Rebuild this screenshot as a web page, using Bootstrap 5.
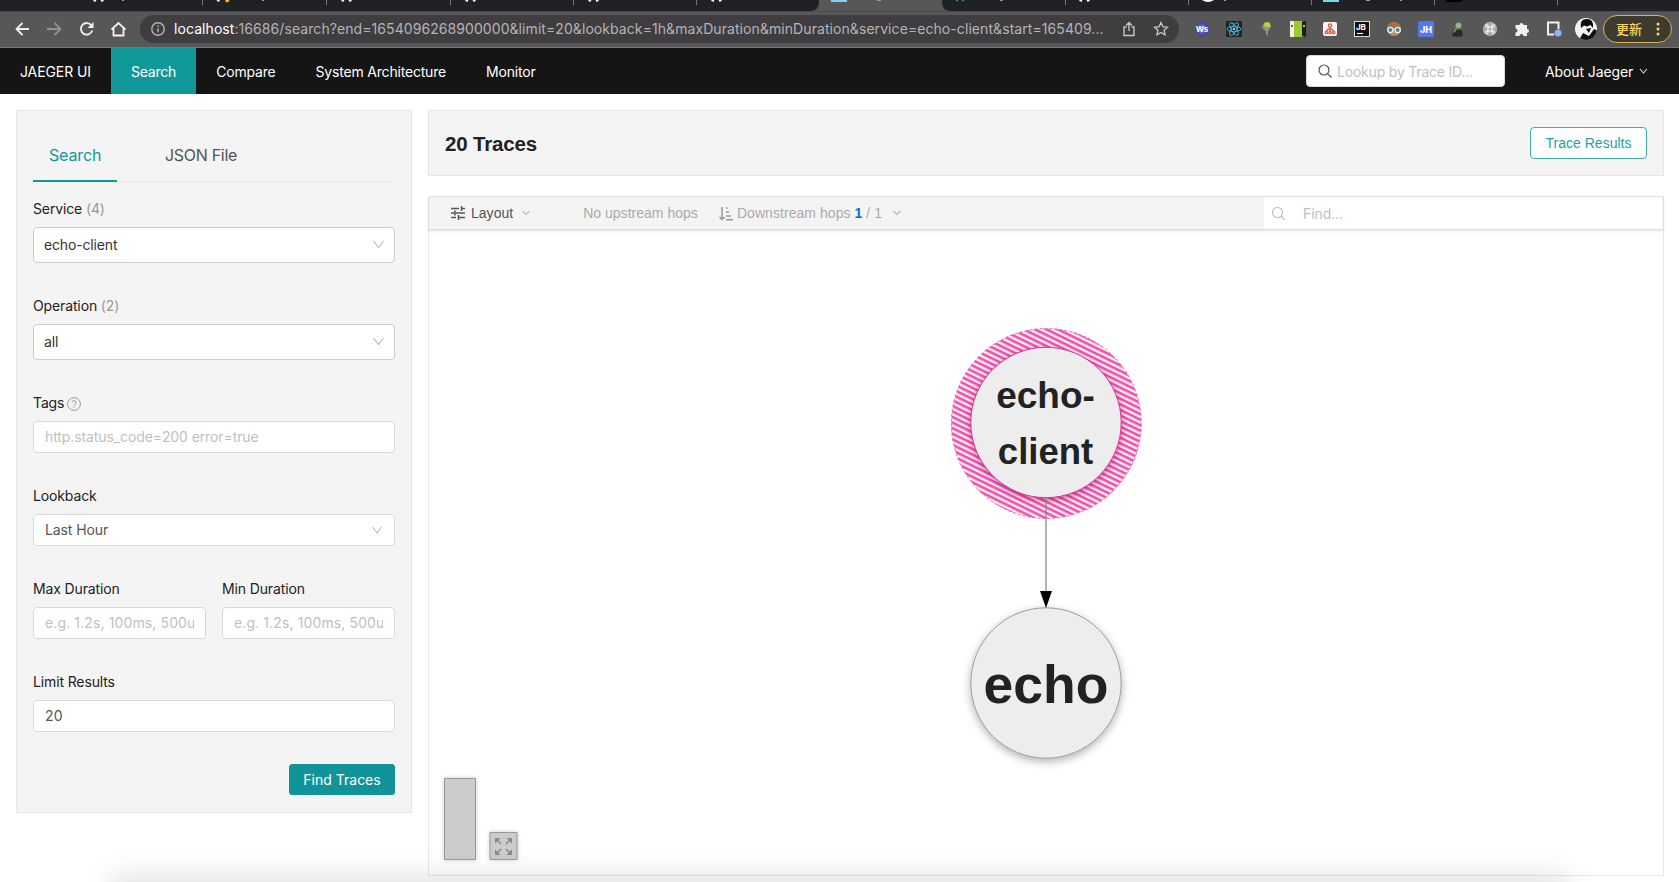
<!DOCTYPE html>
<html lang="en">
<head>
<meta charset="utf-8">
<title>Jaeger UI</title>
<link href="https://cdn.jsdelivr.net/npm/bootstrap@5.3.0/dist/css/bootstrap.min.css" rel="stylesheet">
<style>
:root{--teal:#119999}
body{font:14px/1.5 Inter,"Liberation Sans",sans-serif;letter-spacing:-.1px;color:#222;height:882px;overflow:hidden;position:relative;background:#fff}
svg{display:block;flex:none}
.tabstrip{height:11px;background:#202124}
.browserbar{height:37px;background:#575757;border-top:1px solid #4c4c4c;border-bottom:1px solid #777;padding:0 7px 2px 14px}
.omnibox{margin-left:14px;width:1039px;height:28px;border-radius:14px;background:#3f3d40;color:#b5b4b6;padding:0 10px 0 11px;font-size:14px;white-space:nowrap;letter-spacing:.072px}
.omnibox b{font-weight:400;color:#fff}
.update{width:69px;height:28px;border:1.5px solid #d9b44f;border-radius:14px;background:#3d3a30;color:#fdd663;font:500 13px "Noto Sans CJK SC",sans-serif;padding-left:12px}
.ext{margin-left:15px;gap:16px}
.topnav{height:46px;background:#151515;color:#fff}
.topnav .item{height:46px;line-height:47px;padding:0 20px;white-space:nowrap;letter-spacing:-.19px}
.topnav .item:first-child{letter-spacing:-.1px}
.topnav .item.active{background:var(--teal)}
.lookup{width:199px;height:32px;background:#fff;border-radius:4px;border:1px solid #d9d9d9;color:#bfbfbf;padding-left:11px;letter-spacing:-.2px}
.side{width:396px;height:703px;background:#f4f4f4;border:1px solid #e6e6e6;padding:16px 16px 16px 16px}
.tabs{height:55px;border-bottom:1px solid #e8e8e8;font-size:16px;letter-spacing:-.3px}
.tabs>div{height:55px;padding-top:16px}
.tabs .on{color:var(--teal);border-bottom:2px solid var(--teal);width:84px;padding-left:16px;letter-spacing:-.15px}
.flabel{height:36px;line-height:36px;white-space:nowrap;letter-spacing:-.13px}
.flabel small{color:#999;font-size:14px}
.fbox{background:#fff;border:1px solid #d9d9d9;border-radius:4px;height:32px;padding:0 11px 1px;margin-bottom:25px;white-space:nowrap;overflow:hidden;color:#555}
.fbox.tall{height:36px;border-color:#ccc;color:#333;padding:0 10px 1px;letter-spacing:-.15px}
.fbox.ph{color:#bfbfbf}
.fbox.dur{letter-spacing:.12px}
.fbox>span{overflow:hidden}
.find{width:106px;height:31px;background:#11939a;border-color:#11939a;border-radius:3px;color:#fff;font-size:14px;padding:0}
.helv{font-family:"Liberation Sans",Arial,sans-serif;letter-spacing:.02px}
.panel{width:1236px;height:66px;background:#f4f4f4;border:1px solid #e6e6e6;padding:0 16px}
.panel h2{font-size:20.5px;font-weight:700;margin:0;letter-spacing:-.18px;padding-top:2px}
.results{width:117px;height:32px;border:1px solid #3bb0ac;background:#fff;border-radius:4px;color:#26a29e;font-size:14px;padding:0}
.graph{width:1236px;height:680px;border:1px solid #e6e6e6;margin-top:20px}
.gbar{height:33px;background:#f4f4f4;border-bottom:1px solid #ddd;box-shadow:0 1px 3px rgba(0,0,0,.12);color:#aaa;padding-left:22px;position:relative;white-space:nowrap}
.gbar>span{padding-top:1px}
.finder{width:398px;height:32px;background:#fff;color:#bfbfbf;padding-left:8px;margin-right:1px;margin-left:auto}
.shade{position:absolute;left:120px;right:120px;bottom:-16px;height:12px;box-shadow:0 0 28px 10px rgba(0,0,0,.12)}
</style>
</head>
<body>
<div class="tabstrip">
<svg width="1679" height="11">
<path d="M810 11q9 0 9-9V0H942v2q0 9 9 9z" fill="#575757"/>
<path d="M202.500 0v5M326.500 0v5M450.500 0v5M573.500 0v5M696.500 0v5M1065.500 0v5M1188.500 0v5M1311.500 0v5M1434.500 0v5M1557.500 0v5" stroke="#77787a"/>
<g stroke="#eee" stroke-width="2" fill="none"><path d="M93.500 0l2.500 1M103.500 0l-2.500 1M217 0l2.500 1M341.500 0l2.500 1M351.500 0l-2.500 1M465.500 0l2.500 1M475.500 0l-2.500 1M588.500 0l2.500 1M598.500 0l-2.500 1M711.500 0l2.500 1M721.500 0l-2.500 1M1079.500 0l2.500 1M1089.500 0l-2.500 1"/></g>
<path d="M229 0l-3.500 1" stroke="#fbbc04" stroke-width="3"/>
<path d="M831 0h16v2h-16zM1323 0h16v2h-16z" fill="#7fd3e8"/>
<path d="M956 0l2 1M964 0l-2 1" stroke="#229a22" stroke-width="1.500"/>
<path d="M1202 0h12q-6 4-12 0z" fill="#fff"/><path d="M1446 0h16v2h-16z" fill="#000"/>
<path d="M122 .500h2M262 .500h2M877 .500h4M1000 .500h3M1224 .500h2M1366 .500h4M1400 .500h2" stroke="#999"/>
</svg>
</div>
<div class="browserbar d-flex align-items-center">
<svg width="112" height="20" fill="none" stroke="#f1f1f1" stroke-width="1.800"><path d="M15 10H3M8.500 4L2.500 10l6 6"/><path d="M33 10h13M40.500 4l6 6-6 6" stroke="#929292"/><path d="M77.500 6.500A5.800 5.800 0 1 0 78.300 11.500"/><path d="M79.500 3v6h-6z" fill="#f1f1f1" stroke="none"/><path d="M97.500 10.500L104.500 4l7 6.500M99.500 9v7.500h10V9"/></svg>
<div class="omnibox d-flex align-items-center">
<svg width="14" height="14" fill="none" stroke="#b5b4b6" stroke-width="1.400"><circle cx="7" cy="7" r="6.200"/><path d="M7 6.300v4M7 3.500v1.500"/></svg>
<span style="margin-left:9px"><b>localhost</b>:16686/search?end=1654096268900000&amp;limit=20&amp;lookback=1h&amp;maxDuration&amp;minDuration&amp;service=echo-client&amp;start=165409...</span>
<svg class="ms-auto" width="14" height="16" fill="none" stroke="#c4c3c5" stroke-width="1.400"><path d="M4.500 6H2v8.500h10V6H9.500M7 10V1.500M4 4.500l3-3 3 3"/></svg>
<svg style="margin-left:17px" width="16" height="16" fill="none" stroke="#c4c3c5" stroke-width="1.400"><path d="M8 1.500l1.900 4.200 4.600.5-3.400 3.100.9 4.500L8 11.500l-4 2.300.9-4.500L1.500 6.200l4.600-.5z"/></svg>
</div>
<div class="ext d-flex align-items-center">
<svg width="16" height="16"><defs><radialGradient id="w"><stop stop-color="#7d7ce8"/><stop offset="1" stop-color="#3c3ca4"/></radialGradient></defs><circle cx="8" cy="8" r="7.200" fill="url(#w)"/><text x="8" y="11" text-anchor="middle" font-size="8" font-weight="700" fill="#fff">Ws</text></svg>
<svg width="16" height="16"><rect width="16" height="16" rx="1" fill="#20232a"/><g fill="none" stroke="#4fb9d8" stroke-width=".9"><ellipse cx="8" cy="8" rx="7" ry="2.700"/><ellipse cx="8" cy="8" rx="7" ry="2.700" transform="rotate(60 8 8)"/><ellipse cx="8" cy="8" rx="7" ry="2.700" transform="rotate(120 8 8)"/></g><circle cx="8" cy="8" r="1.300" fill="#61dafb"/></svg>
<svg width="16" height="16"><circle cx="9" cy="4.500" r="3.600" fill="#b9cf35"/><path d="M3 5.500h10.500L9.800 10.500v4.500l-1.800-1.500v-3z" fill="#8c9793"/><path d="M8 5.500a3 3 0 0 1 4 0z" fill="#dce86a"/></svg>
<svg width="16" height="16"><path d="M0 0h4v16H0z" fill="#eef1e4"/><path d="M4 0h8v16H4z" fill="#9dc92c"/><path d="M12 1l4-1v16l-4-2z" fill="#1c1f14"/><circle cx="2" cy="5" r="1" fill="#333"/><circle cx="14" cy="5" r="1" fill="#eee"/></svg>
<svg width="16" height="16"><rect x="1" y="1" width="14" height="14" rx="2" fill="#f7f4f2"/><g fill="none" stroke="#e2573d" stroke-width="1.300"><circle cx="8" cy="4.500" r="1.600"/><path d="M8 6v5M4.500 11Q4.500 8 8 8t3.500 3"/><circle cx="4.300" cy="11.500" r="1.200"/><circle cx="8" cy="11.500" r="1.200"/><circle cx="11.700" cy="11.500" r="1.200"/></g></svg>
<svg width="16" height="16"><rect x=".5" y=".5" width="15" height="15" fill="#111" stroke="#ddd"/><text x="2" y="8.500" font-size="8" font-weight="700" fill="#fff">JB</text><path d="M3 12.500h6" stroke="#fff" stroke-width="1.200"/></svg>
<svg width="16" height="16"><circle cx="8" cy="8" r="7" fill="#c68e63"/><path d="M1.500 7Q3 1 8 1t6.500 6z" fill="#a96d43"/><g fill="#4a8794" stroke="#e6f3f4" stroke-width="1.300"><circle cx="4.300" cy="9" r="2.600"/><circle cx="11.700" cy="9" r="2.600"/></g></svg>
<svg width="16" height="16"><rect width="16" height="16" rx="1.500" fill="#5578ee"/><text x="8" y="11.500" text-anchor="middle" font-size="9" font-weight="800" fill="#fff">JH</text></svg>
<svg width="16" height="16"><path d="M2.500 15.500V10q5-4 10 0v5.500z" fill="#272b26"/><circle cx="8.500" cy="4.500" r="3.500" fill="#a3aea3" stroke="#45723a" stroke-width="1.300"/><path d="M6.500 7.500l-3 4" stroke="#6ba83c" stroke-width="1.500"/></svg>
<svg width="16" height="16"><circle cx="8" cy="8" r="7.200" fill="#aaa"/><path d="M6 6h4v4H6zM6 6H4.800A1.300 1.300 0 1 1 6 4.800zM10 6V4.800A1.300 1.300 0 1 1 11.200 6zM10 10h1.200A1.300 1.300 0 1 1 10 11.200zM6 10v1.200A1.300 1.300 0 1 1 4.800 10z" fill="none" stroke="#fff"/></svg>
<svg width="16" height="16" fill="#f1f1f1"><path d="M1.500 4h4a2 2 0 1 1 4 0h3.500v4a2 2 0 1 1 0 4v3H9.500a2 2 0 0 0-4 0h-4v-3.500a2 2 0 0 0 0-4z"/></svg>
<svg width="16" height="16"><path d="M8 13.500H2v-12h10.500V8" fill="none" stroke="#f1f1f1" stroke-width="2"/><circle cx="12" cy="12" r="3.500" fill="#8ab4f8"/></svg>
</div>
<svg style="margin-left:13px" width="22" height="22"><defs><clipPath id="av"><circle cx="11" cy="11" r="11"/></clipPath></defs><g clip-path="url(#av)"><path d="M0 0h22v22H0z" fill="#f3f3f3"/><path d="M6 10Q4 1 12 1q7 0 6 9l-2.500-3-3.500 1.500L9 7.500z" fill="#0b0b0b"/><path d="M4 22l4-7 6 3 5-7 4 2v9zM11 11l5-1-2 5z" fill="#111"/></g></svg>
<div class="update d-flex align-items-center ms-auto"><span>更新</span><svg style="margin-left:14px" width="4" height="14" fill="#fdd663"><circle cx="2" cy="2" r="1.500"/><circle cx="2" cy="7" r="1.500"/><circle cx="2" cy="12" r="1.500"/></svg></div>
</div>

<nav class="topnav d-flex align-items-center">
<div class="item">JAEGER UI</div><div class="item active">Search</div><div class="item">Compare</div><div class="item">System Architecture</div><div class="item">Monitor</div>
<div class="lookup d-flex align-items-center ms-auto"><svg width="14" height="14" fill="none" stroke="#555" stroke-width="1.200"><circle cx="6" cy="6" r="5"/><path d="M9.600 9.600L13.500 13.500"/></svg><span style="margin-left:5px">Lookup by Trace ID...</span></div>
<div class="d-flex align-items-center" style="margin-left:40px;width:134px"><span>About Jaeger</span><svg style="margin-left:6px" width="9" height="8" fill="none" stroke="#ddd" stroke-width="1.100"><path d="M1 2l3.500 4L8 2"/></svg></div>
</nav>

<main class="d-flex align-items-start" style="padding:16px 0 0 16px;gap:16px">
<section class="side flex-shrink-0">
<div class="tabs d-flex"><div class="on">Search</div><div style="margin-left:48px;color:#555">JSON File</div></div>
<div style="height:9px"></div>
<div class="flabel">Service <small>(4)</small></div>
<div class="fbox tall d-flex align-items-center justify-content-between">echo-client<svg width="11" height="9" fill="none" stroke="#bbb" stroke-width="1.100"><path d="M.5 1l5 6.500L10.500 1"/></svg></div>
<div class="flabel">Operation <small>(2)</small></div>
<div class="fbox tall d-flex align-items-center justify-content-between">all<svg width="11" height="9" fill="none" stroke="#bbb" stroke-width="1.100"><path d="M.5 1l5 6.500L10.500 1"/></svg></div>
<div class="flabel d-flex align-items-center">Tags<svg style="margin:2px 0 0 3px" width="14" height="14" fill="none" stroke="#999"><circle cx="7" cy="7" r="6.400"/><path d="M5 5.600a2 2 0 1 1 2.600 1.900q-.6.300-.6 1M7 9.600v1.200"/></svg></div>
<div class="fbox ph d-flex align-items-center">http.status_code=200 error=true</div>
<div class="flabel">Lookback</div>
<div class="fbox d-flex align-items-center justify-content-between">Last Hour<svg width="10" height="8" fill="none" stroke="#bbb" stroke-width="1.100" style="margin-right:1px"><path d="M.5 1l4.500 6L9.500 1"/></svg></div>
<div class="d-flex" style="gap:16px">
<div style="width:173px"><div class="flabel">Max Duration</div><div class="fbox ph dur d-flex align-items-center"><span>e.g. 1.2s, 100ms, 500us</span></div></div>
<div style="width:173px"><div class="flabel">Min Duration</div><div class="fbox ph dur d-flex align-items-center"><span>e.g. 1.2s, 100ms, 500us</span></div></div>
</div>
<div class="flabel">Limit Results</div>
<div class="fbox d-flex align-items-center" style="letter-spacing:.2px">20</div>
<div class="d-flex justify-content-end" style="padding-top:7px"><button class="btn find">Find Traces</button></div>
</section>

<section>
<div class="panel d-flex align-items-center justify-content-between helv"><h2>20 Traces</h2><button class="btn results">Trace Results</button></div>
<div class="graph">
<div class="gbar d-flex align-items-center helv">
<svg width="14" height="14" fill="none" stroke="#555" stroke-width="1.500"><path d="M0 2.500h8M10 2.500h4M10.500 0v5M0 7h3.500M5 7h9M4 4.500v5M0 11.500h5M7.500 11.500H14M7.500 9v5"/></svg>
<span style="margin-left:6px;color:#555">Layout</span>
<svg style="margin-left:9px" width="8" height="6" fill="none" stroke="#999"><path d="M.5 1L4 4.500 7.500 1"/></svg>
<span style="margin-left:53px">No upstream hops</span>
<svg style="margin-left:21px" width="14" height="15" fill="none" stroke="#999" stroke-width="1.500"><path d="M3 1v12M.5 11L3 13.500 5.500 11M7 2h1.500M7 6h3M7 10h5M7 13.800h7"/></svg>
<span style="margin-left:4px;letter-spacing:.06px">Downstream hops <b style="color:#0a6fdf">1</b> / 1</span>
<svg style="margin-left:11px" width="8" height="6" fill="none" stroke="#888"><path d="M.5 1L4 4.500 7.500 1"/></svg>
<div class="finder d-flex align-items-center"><svg width="13" height="13" fill="none" stroke="#bbb" stroke-width="1.100"><circle cx="5.500" cy="5.500" r="5"/><path d="M9 9l3.700 3.700"/></svg><span style="margin-left:18px;font-family:Inter,sans-serif;letter-spacing:-.1px">Find...</span></div>
</div>
<svg width="1234" height="645" viewBox="429 230 1234 645">
<defs>
<pattern id="hatch" width="10" height="5" patternUnits="userSpaceOnUse" patternTransform="rotate(26)"><rect width="10" height="5" fill="#fff0f8"/><rect y="1" width="10" height="2.600" fill="#f04fa8"/></pattern>
<filter id="sh" x="-20%" y="-20%" width="140%" height="140%"><feDropShadow dx="0" dy="3" stdDeviation="4" flood-color="#000" flood-opacity=".3"/></filter>
<filter id="pk" x="-20%" y="-20%" width="140%" height="140%"><feDropShadow dx="0" dy="2" stdDeviation="3" flood-color="#a00060" flood-opacity=".6"/></filter>
</defs>
<circle cx="1046.300" cy="423.500" r="95" fill="url(#hatch)" stroke="#f04fa8" stroke-width=".8" stroke-dasharray="3 2"/>
<circle cx="1046" cy="422.500" r="75.200" fill="#ededed" stroke="#d13a8e" filter="url(#pk)"/>
<path d="M1046 498v94" stroke="#888" stroke-width="1.300"/>
<circle cx="1046" cy="683" r="75.200" fill="#ededed" stroke="#999" filter="url(#sh)"/>
<path d="M1040 591h12l-6 17z"/>
<g font-family="'Liberation Sans',Arial,sans-serif" font-weight="700" fill="#222" text-anchor="middle" letter-spacing="0">
<text x="1045.500" y="408" font-size="37">echo-</text><text x="1045.500" y="463.500" font-size="36.500">client</text><text x="1046" y="702.500" font-size="53.500">echo</text></g>
<g stroke="#999" fill="#ccc" style="filter:drop-shadow(0 0 2px rgba(0,0,0,.2))"><path d="M444.500 778.500h31v81h-31zM490 832.500h27v27h-27z"/></g>
<g stroke="#888" stroke-width="1.500" fill="#888"><path d="M496 839l5 5M511 839l-5 5M496 854l5-5M511 854l-5-5"/><path stroke="none" d="M495 838h5.500l-5.500 5.500zM512 838h-5.500l5.500 5.500zM495 855h5.500l-5.500-5.500zM512 855h-5.500l5.500-5.500z"/></g>
</svg>
</div>
</section>
</main>
<div class="shade"></div>
<script src="https://cdn.jsdelivr.net/npm/bootstrap@5.3.0/dist/js/bootstrap.bundle.min.js"></script>
</body>
</html>
